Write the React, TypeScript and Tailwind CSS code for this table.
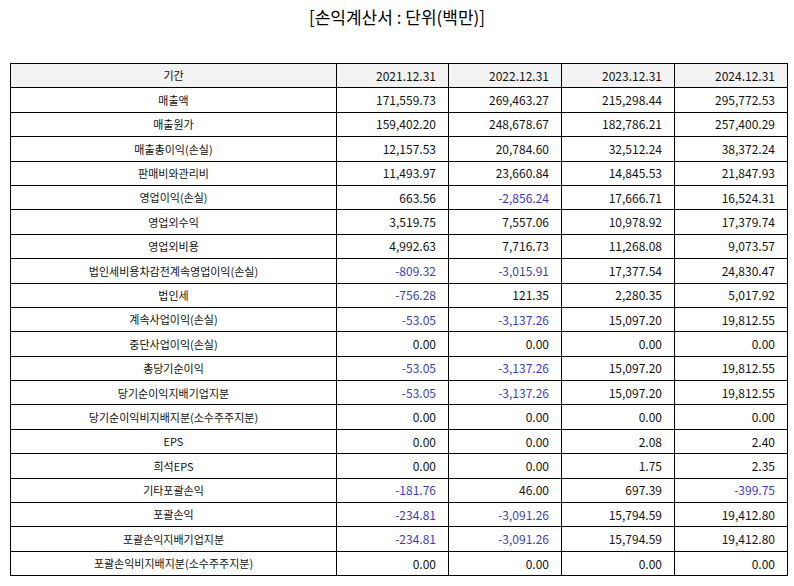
const header = ["기간", "2021.12.31", "2022.12.31", "2023.12.31", "2024.12.31"];

const rows: [string, string, string, string, string][] = [
  ["매출액", "171,559.73", "269,463.27", "215,298.44", "295,772.53"],
  ["매출원가", "159,402.20", "248,678.67", "182,786.21", "257,400.29"],
  ["매출총이익(손실)", "12,157.53", "20,784.60", "32,512.24", "38,372.24"],
  ["판매비와관리비", "11,493.97", "23,660.84", "14,845.53", "21,847.93"],
  ["영업이익(손실)", "663.56", "-2,856.24", "17,666.71", "16,524.31"],
  ["영업외수익", "3,519.75", "7,557.06", "10,978.92", "17,379.74"],
  ["영업외비용", "4,992.63", "7,716.73", "11,268.08", "9,073.57"],
  ["법인세비용차감전계속영업이익(손실)", "-809.32", "-3,015.91", "17,377.54", "24,830.47"],
  ["법인세", "-756.28", "121.35", "2,280.35", "5,017.92"],
  ["계속사업이익(손실)", "-53.05", "-3,137.26", "15,097.20", "19,812.55"],
  ["중단사업이익(손실)", "0.00", "0.00", "0.00", "0.00"],
  ["총당기순이익", "-53.05", "-3,137.26", "15,097.20", "19,812.55"],
  ["당기순이익지배기업지분", "-53.05", "-3,137.26", "15,097.20", "19,812.55"],
  ["당기순이익비지배지분(소수주주지분)", "0.00", "0.00", "0.00", "0.00"],
  ["EPS", "0.00", "0.00", "2.08", "2.40"],
  ["희석EPS", "0.00", "0.00", "1.75", "2.35"],
  ["기타포괄손익", "-181.76", "46.00", "697.39", "-399.75"],
  ["포괄손익", "-234.81", "-3,091.26", "15,794.59", "19,412.80"],
  ["포괄손익지배기업지분", "-234.81", "-3,091.26", "15,794.59", "19,412.80"],
  ["포괄손익비지배지분(소수주주지분)", "0.00", "0.00", "0.00", "0.00"],
];

export default function App() {
  return (
    <div
      className="w-[794px] h-[586px] bg-white text-[#111] overflow-hidden"
      style={{ fontFamily: '"Noto Sans CJK KR", "Noto Sans", sans-serif' }}
    >
      <h1 className="text-center text-[17px] leading-[20px] pt-[7px] text-black">
        [손익계산서 : 단위(백만)]
      </h1>

      <table className="ml-[10px] mt-[36px] w-[777px] border-collapse table-fixed text-[11px]">
        <colgroup>
          <col className="w-[326px]" />
          <col className="w-[112px]" />
          <col className="w-[113px]" />
          <col className="w-[113px]" />
          <col className="w-[113px]" />
        </colgroup>
        <thead>
          <tr className="h-[24.4px] bg-[#f2f2f2]">
            {header.map((h, i) => (
              <th
                key={h}
                className={`border border-black font-normal p-0 ${
                  i === 0 ? "text-center" : "text-right pr-[12px] text-[12px]"
                }`}
              >
                {h}
              </th>
            ))}
          </tr>
        </thead>
        <tbody>
          {rows.map((r) => (
            <tr key={r[0]} className="h-[24.4px]">
              <td className="border border-black text-center p-0">{r[0]}</td>
              {r.slice(1).map((v, i) => (
                <td
                  key={i}
                  className={`border border-black text-right text-[12px] pr-[12px] p-0 ${
                    v.startsWith("-") ? "text-[#3b3bd0]" : ""
                  }`}
                >
                  {v}
                </td>
              ))}
            </tr>
          ))}
        </tbody>
      </table>
    </div>
  );
}
